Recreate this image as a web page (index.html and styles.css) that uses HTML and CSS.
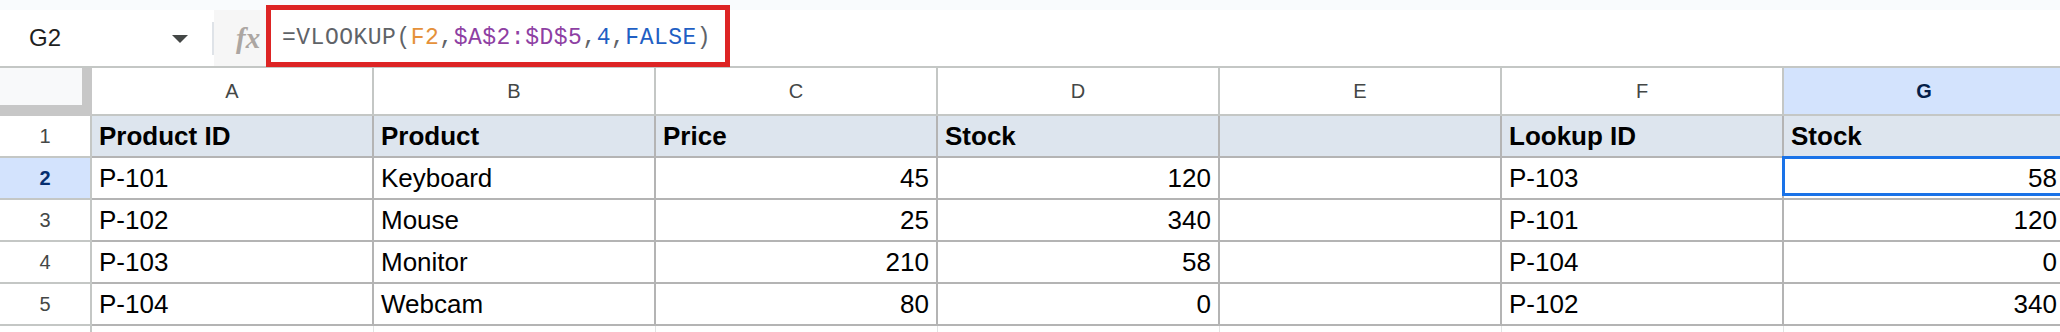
FILE: index.html
```html
<!DOCTYPE html>
<html lang="en">
<head>
    <meta charset="UTF-8">
    <title>VLOOKUP sheet</title>
    <link rel="stylesheet" href="styles.css">
</head>
<body>
    <div class="top-band"></div>

    <div class="formula-bar">
        <div class="name-box">
            <span class="cell-ref">G2</span>
            <svg class="caret" width="16" height="8" viewBox="0 0 16 8"><polygon points="0,0 16,0 8,8"/></svg>
        </div>
        <div class="divider"></div>
        <div class="fx">fx</div>
        <div class="formula">=VLOOKUP(<span class="arg-cell">F2</span>,<span class="arg-range">$A$2:$D$5</span>,<span class="arg-lit">4</span>,<span class="arg-lit">FALSE</span>)</div>
        <div class="callout"></div>
    </div>

    <div class="sheet">
        <!-- column headers -->
        <div class="corner"></div>
        <div class="col-head">A</div>
        <div class="col-head">B</div>
        <div class="col-head">C</div>
        <div class="col-head">D</div>
        <div class="col-head">E</div>
        <div class="col-head">F</div>
        <div class="col-head active">G</div>

        <!-- row 1 -->
        <div class="row-head">1</div>
        <div class="cell title">Product ID</div>
        <div class="cell title">Product</div>
        <div class="cell title">Price</div>
        <div class="cell title">Stock</div>
        <div class="cell title"></div>
        <div class="cell title">Lookup ID</div>
        <div class="cell title">Stock</div>

        <!-- row 2 -->
        <div class="row-head active">2</div>
        <div class="cell">P-101</div>
        <div class="cell">Keyboard</div>
        <div class="cell num">45</div>
        <div class="cell num">120</div>
        <div class="cell"></div>
        <div class="cell">P-103</div>
        <div class="cell num selected">58<span class="selection"></span></div>

        <!-- row 3 -->
        <div class="row-head">3</div>
        <div class="cell">P-102</div>
        <div class="cell">Mouse</div>
        <div class="cell num">25</div>
        <div class="cell num">340</div>
        <div class="cell"></div>
        <div class="cell">P-101</div>
        <div class="cell num">120</div>

        <!-- row 4 -->
        <div class="row-head">4</div>
        <div class="cell">P-103</div>
        <div class="cell">Monitor</div>
        <div class="cell num">210</div>
        <div class="cell num">58</div>
        <div class="cell"></div>
        <div class="cell">P-104</div>
        <div class="cell num">0</div>

        <!-- row 5 -->
        <div class="row-head">5</div>
        <div class="cell">P-104</div>
        <div class="cell">Webcam</div>
        <div class="cell num">80</div>
        <div class="cell num">0</div>
        <div class="cell"></div>
        <div class="cell">P-102</div>
        <div class="cell num">340</div>

        <!-- row 6, only its top edge shows -->
        <div class="row-head"></div>
        <div class="cell empty"></div>
        <div class="cell empty"></div>
        <div class="cell empty"></div>
        <div class="cell empty"></div>
        <div class="cell empty"></div>
        <div class="cell empty"></div>
        <div class="cell empty"></div>
    </div>
</body>
</html>
```

FILE: styles.css
```css
body, html {
    margin: 0;
    padding: 0;
    width: 2060px;
    height: 332px;
    overflow: hidden;
    background: #fff;
    font-family: "Liberation Sans", Arial, sans-serif;
}
.top-band {
    height: 10px;
    background: #f9fbfd;
}
.formula-bar {
    position: relative;
    display: flex;
    align-items: stretch;
    height: 56px;
    background: #fff;
}
.name-box {
    width: 212px;
    box-sizing: border-box;
    padding: 0 24px 0 29px;
    display: flex;
    align-items: center;
    justify-content: space-between;
}
.cell-ref {
    font-size: 24px;
    color: #1f1f1f;
}
.caret {
    fill: #444746;
    margin-top: 2px;
}
.divider {
    width: 2px;
    margin: 12px 0 11px;
    background: #dfe3e8;
}
.fx {
    width: 52px;
    box-sizing: border-box;
    padding-left: 22px;
    display: flex;
    align-items: center;
    background: #f6f6f6;
    font-family: "Liberation Serif", "Times New Roman", serif;
    font-style: italic;
    font-weight: bold;
    font-size: 29px;
    color: #aca6a2;
}
.formula {
    flex: 1;
    display: flex;
    align-items: center;
    padding-left: 16px;
    font-family: "Liberation Mono", "DejaVu Sans Mono", monospace;
    font-size: 23px;
    letter-spacing: 0.5px;
    color: #5f6368;
    white-space: pre;
}
.arg-cell {
    color: #e5913a;
}
.arg-range {
    color: #8e3fa3;
}
.arg-lit {
    color: #1f5fc4;
}
.callout {
    position: absolute;
    left: 266px;
    top: -5px;
    width: 464px;
    height: 62px;
    box-sizing: border-box;
    border: 5px solid #dd2424;
    z-index: 5;
}

.sheet {
    display: grid;
    grid-template-columns: 92px repeat(7, 282px);
    grid-template-rows: 48px repeat(6, 42px);
    border-top: 2px solid #c4c7c5;
}
.sheet > div {
    box-sizing: border-box;
    display: flex;
    align-items: center;
}
.corner {
    background: #f8f9fa;
    border-right: 10px solid #c7c7c7;
    border-bottom: 11px solid #c7c7c7;
}
.col-head {
    justify-content: center;
    font-size: 20px;
    color: #444746;
    border-right: 2px solid #c4c7c5;
    border-bottom: 2px solid #c4c7c5;
}
.col-head.active {
    background: #d3e3fd;
    color: #041e49;
    font-weight: bold;
}
.row-head {
    justify-content: center;
    font-size: 20px;
    color: #444746;
    border-right: 2px solid #c4c7c5;
    border-bottom: 2px solid #c4c7c5;
}
.row-head.active {
    background: #d3e3fd;
    color: #062e6f;
    font-weight: bold;
}
.cell {
    padding: 0 7px;
    font-size: 26px;
    color: #000;
    border-right: 2px solid #b4b4b4;
    border-bottom: 2px solid #b4b4b4;
    white-space: nowrap;
}
.cell.title {
    background: #dde5ee;
    font-weight: bold;
}
.cell.num {
    justify-content: flex-end;
}
.cell.empty {
    border-color: #e2e3e3;
    border-width: 0 1px 0 0;
}
.selected {
    position: relative;
}
.selection {
    position: absolute;
    top: -2px;
    left: -2px;
    right: -4px;
    bottom: 2px;
    border: 3px solid #1a73e8;
}
```
